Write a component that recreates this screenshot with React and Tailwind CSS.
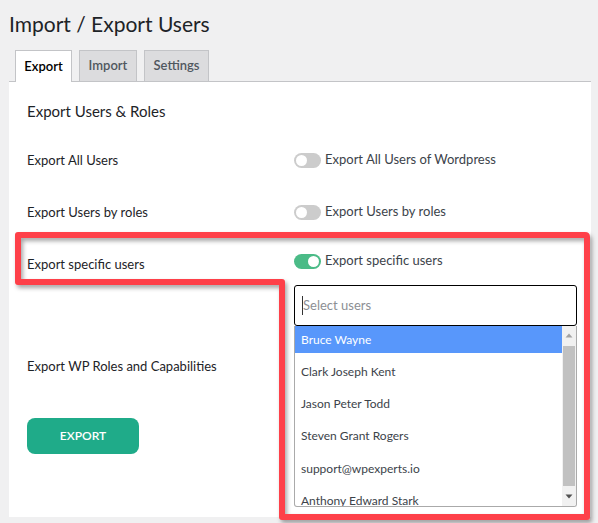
import React from 'react';

const users = [
  'Bruce Wayne',
  'Clark Joseph Kent',
  'Jason Peter Todd',
  'Steven Grant Rogers',
  'support@wpexperts.io',
  'Anthony Edward Stark',
];

function Toggle({ on }) {
  return (
    <span className={`relative inline-block w-[27px] h-[15px] rounded-full shrink-0 ${on ? 'bg-[#4bbb87]' : 'bg-[#cccccc]'}`}>
      <span className={`absolute top-[2px] w-[11px] h-[11px] rounded-full bg-white ${on ? 'left-[14px]' : 'left-[2px]'}`} />
    </span>
  );
}

function ToggleRow({ on, text }) {
  return (
    <div className="flex items-center gap-[4px] h-[20px]">
      <Toggle on={on} />
      <span className="text-[13px] text-[#3c434a]">{text}</span>
    </div>
  );
}

export default function App() {
  return (
    <div className="relative w-[598px] h-[523px] bg-[#f0f0f1] overflow-hidden font-['Lato',sans-serif] text-[#1d2327]">
      <h1 className="pl-[9px] pt-[9px] text-[21px] leading-[30px] font-normal text-[#1d2327]">
        Import / Export Users
      </h1>

      {/* tabs */}
      <div className="flex gap-[7px] pl-[15px] mt-[10px] h-[32px] items-end">
        <div className="h-[32px] w-[57px] justify-center flex items-center border border-b-0 border-[#c3c4c7] bg-white text-[13px] font-semibold text-black -mb-px relative z-10">
          Export
        </div>
        <div className="h-[31px] w-[58px] justify-center flex items-center border border-b-0 border-[#c3c4c7] bg-[#dcdcde] text-[13px] font-semibold text-[#50575e]">
          Import
        </div>
        <div className="h-[31px] w-[65px] justify-center flex items-center border border-b-0 border-[#c3c4c7] bg-[#dcdcde] text-[13px] font-semibold text-[#50575e]">
          Settings
        </div>
      </div>

      {/* panel */}
      <div className="ml-[9px] w-[582px] h-[436px] bg-white border-t border-[#c3c4c7] pl-[18px]">
        <h2 className="pt-[19px] text-[15px] leading-[20px] font-normal text-[#1d2327]">Export Users &amp; Roles</h2>

        <div className="grid grid-cols-[267px_1fr] mt-[13px]">
          <div className="h-[52px] pt-[16px] text-[13px] leading-[20px]">Export All Users</div>
          <div className="h-[52px] pt-[16px]"><ToggleRow text="Export All Users of Wordpress" /></div>

          <div className="h-[52px] pt-[16px] text-[13px] leading-[20px]">Export Users by roles</div>
          <div className="h-[52px] pt-[16px]"><ToggleRow text="Export Users by roles" /></div>

          <div className="pt-[16px] text-[13px] leading-[20px]">Export specific users</div>
          <div className="pt-[13px] pr-[14px]">
            <ToggleRow on text="Export specific users" />
            <div className="relative mt-[14px]">
              <div className="h-[41px] border border-black rounded-[3px] flex items-center pl-[7px]">
                <span className="w-px h-[19px] bg-[#333]" />
                <span className="text-[13px] text-[#8c8f94]">Select users</span>
              </div>
              <div className="absolute left-0 right-0 top-[41px] h-[181px] border border-t-0 border-[#aaaaaa] rounded-b-[3px] bg-white overflow-hidden flex z-10">
                <div className="flex-1 overflow-hidden flex flex-col gap-[5.3px]">
                  {users.map((u, i) => (
                    <div
                      key={u}
                      className={`h-[27px] shrink-0 flex items-center pl-[6px] text-[12px] ${i === 0 ? 'bg-[#5897fb] text-white' : 'text-[#3c434a]'}`}
                    >
                      {u}
                    </div>
                  ))}
                </div>
                <div className="w-[14px] bg-[#f1f1f1] flex flex-col items-center">
                  <svg width="8" height="14" viewBox="0 0 8 14" className="mt-[3px]">
                    <path d="M0.5 8.5 L4 4.5 L7.5 8.5 Z" fill="#a3a3a3" />
                  </svg>
                  <div className="w-[12px] flex-1 bg-[#c1c1c1] mt-[3px] mb-[20px]" />
                  <svg width="8" height="14" viewBox="0 0 8 14" className="mb-[3px] -mt-[17px]">
                    <path d="M0.5 5.5 L7.5 5.5 L4 9.5 Z" fill="#505050" />
                  </svg>
                </div>
              </div>
            </div>
          </div>

          <div className="pt-[30px] text-[13px] leading-[20px]">Export WP Roles and Capabilities</div>
          <div />
        </div>

        <button className="mt-[42px] w-[112px] h-[36px] rounded-[8px] bg-[#1fab89] text-white text-[12px] font-semibold">
          EXPORT
        </button>
      </div>

      {/* annotation outline */}
      <svg className="absolute inset-0 pointer-events-none z-20" width="598" height="523" viewBox="0 0 598 523">
        <defs>
          <filter id="sh" x="-10%" y="-10%" width="120%" height="120%">
            <feDropShadow dx="2" dy="3" stdDeviation="2" floodColor="#000" floodOpacity="0.35" />
          </filter>
        </defs>
        <path
          d="M18 235 L585 235 Q587 235 587 237 L587 517 L282 517 L282 282 L18 282 Z"
          fill="none"
          stroke="#fe4148"
          strokeWidth="6"
          strokeLinejoin="round"
          filter="url(#sh)"
        />
      </svg>
    </div>
  );
}
